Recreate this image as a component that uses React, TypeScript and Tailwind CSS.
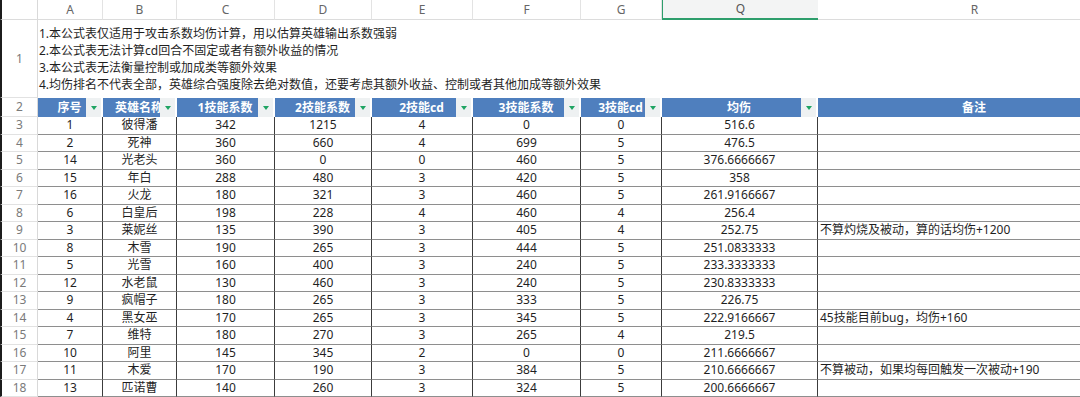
import React from "react";

const colLetters = ["A", "B", "C", "D", "E", "F", "G", "Q", "R"];

const headers = [
  "序号",
  "英雄名称",
  "1技能系数",
  "2技能系数",
  "2技能cd",
  "3技能系数",
  "3技能cd",
  "均伤",
  "备注",
];

const notes = [
  "1.本公式表仅适用于攻击系数均伤计算，用以估算英雄输出系数强弱",
  "2.本公式表无法计算cd回合不固定或者有额外收益的情况",
  "3.本公式表无法衡量控制或加成类等额外效果",
  "4.均伤排名不代表全部，英雄综合强度除去绝对数值，还要考虑其额外收益、控制或者其他加成等额外效果",
];

const rows: (string | number)[][] = [
  [1, "彼得潘", 342, 1215, 4, 0, 0, "516.6", ""],
  [2, "死神", 360, 660, 4, 699, 5, "476.5", ""],
  [14, "光老头", 360, 0, 0, 460, 5, "376.6666667", ""],
  [15, "年白", 288, 480, 3, 420, 5, "358", ""],
  [16, "火龙", 180, 321, 3, 460, 5, "261.9166667", ""],
  [6, "白皇后", 198, 228, 4, 460, 4, "256.4", ""],
  [3, "莱妮丝", 135, 390, 3, 405, 4, "252.75", "不算灼烧及被动，算的话均伤+1200"],
  [8, "木雪", 190, 265, 3, 444, 5, "251.0833333", ""],
  [5, "光雪", 160, 400, 3, 240, 5, "233.3333333", ""],
  [12, "水老鼠", 130, 460, 3, 240, 5, "230.8333333", ""],
  [9, "疯帽子", 180, 265, 3, 333, 5, "226.75", ""],
  [4, "黑女巫", 170, 265, 3, 345, 5, "222.9166667", "45技能目前bug，均伤+160"],
  [7, "维特", 180, 270, 3, 265, 4, "219.5", ""],
  [10, "阿里", 145, 345, 2, 0, 0, "211.6666667", ""],
  [11, "木爱", 170, 190, 3, 384, 5, "210.6666667", "不算被动，如果均每回触发一次被动+190"],
  [13, "匹诺曹", 140, 260, 3, 324, 5, "200.6666667", ""],
];

const RowNum = ({ n, className }: { n: number; className: string }) => (
  <div
    className={`flex items-center justify-center border-l-2 border-l-[#1c1c1c] border-r border-r-[#d9d9d9] border-b border-b-[#e2e2e2] text-[12px] text-[#7a7a7a] ${className}`}
  >
    {n}
  </div>
);

const Dropdown = () => (
  <div className="absolute right-0 top-0 bottom-0 w-[15px] bg-[#eef1f2] flex items-center justify-center">
    <div className="w-0 h-0 border-l-[3.5px] border-r-[3.5px] border-t-[4px] border-l-transparent border-r-transparent border-t-[#1fa463]" />
  </div>
);

export default function App() {
  return (
    <div
      className="w-[1080px] h-[397px] overflow-hidden bg-white"
      style={{ fontFamily: '"Noto Sans", "Noto Sans CJK SC", sans-serif' }}
    >
      <div className="grid grid-cols-[38px_65px_74px_98px_97px_101px_108px_81px_156px_314px] text-[12px] text-[#1f1f1f]">
        {/* column letters */}
        <div className="h-[20px] border-l-2 border-l-[#1c1c1c] border-r border-r-[#d9d9d9] border-b border-b-[#dcdcdc]" />
        {colLetters.map((c) =>
          c === "Q" ? (
            <div
              key={c}
              className="h-[20px] flex items-center justify-center bg-[#f3f4f4] border-l border-l-[#2e9e6c] border-b-2 border-b-[#2e9e6c] text-[#555]"
            >
              {c}
            </div>
          ) : (
            <div
              key={c}
              className="h-[20px] flex items-center justify-center border-r border-r-[#e3e3e3] border-b border-b-[#dcdcdc] text-[#666]"
            >
              {c}
            </div>
          )
        )}

        {/* row 1: merged notes */}
        <RowNum n={1} className="h-[78px]" />
        <div className="col-span-9 h-[78px] flex flex-col justify-center pl-[1px] leading-[17px] whitespace-nowrap">
          {notes.map((t) => (
            <div key={t}>{t}</div>
          ))}
        </div>

        {/* row 2: table header */}
        <RowNum n={2} className="h-[19px]" />
        {headers.map((h, i) => (
          <div
            key={h}
            className="relative h-[19px] bg-[#4f7fbe] border-r-2 border-r-white flex items-center justify-center overflow-hidden text-white font-bold whitespace-nowrap"
          >
            {h}
            {i < 8 && <Dropdown />}
          </div>
        ))}

        {/* data rows */}
        {rows.map((r, ri) => (
          <React.Fragment key={ri}>
            <RowNum n={ri + 3} className="h-[17.5px]" />
            {r.map((v, ci) => (
              <div
                key={ci}
                className={`h-[17.5px] flex items-center border-r border-r-[#3c3c3c] border-b border-b-[#8e8e8e] whitespace-nowrap overflow-hidden ${
                  ci === 8 ? "justify-start pl-[2px]" : "justify-center"
                }`}
              >
                {v}
              </div>
            ))}
          </React.Fragment>
        ))}
      </div>
    </div>
  );
}
